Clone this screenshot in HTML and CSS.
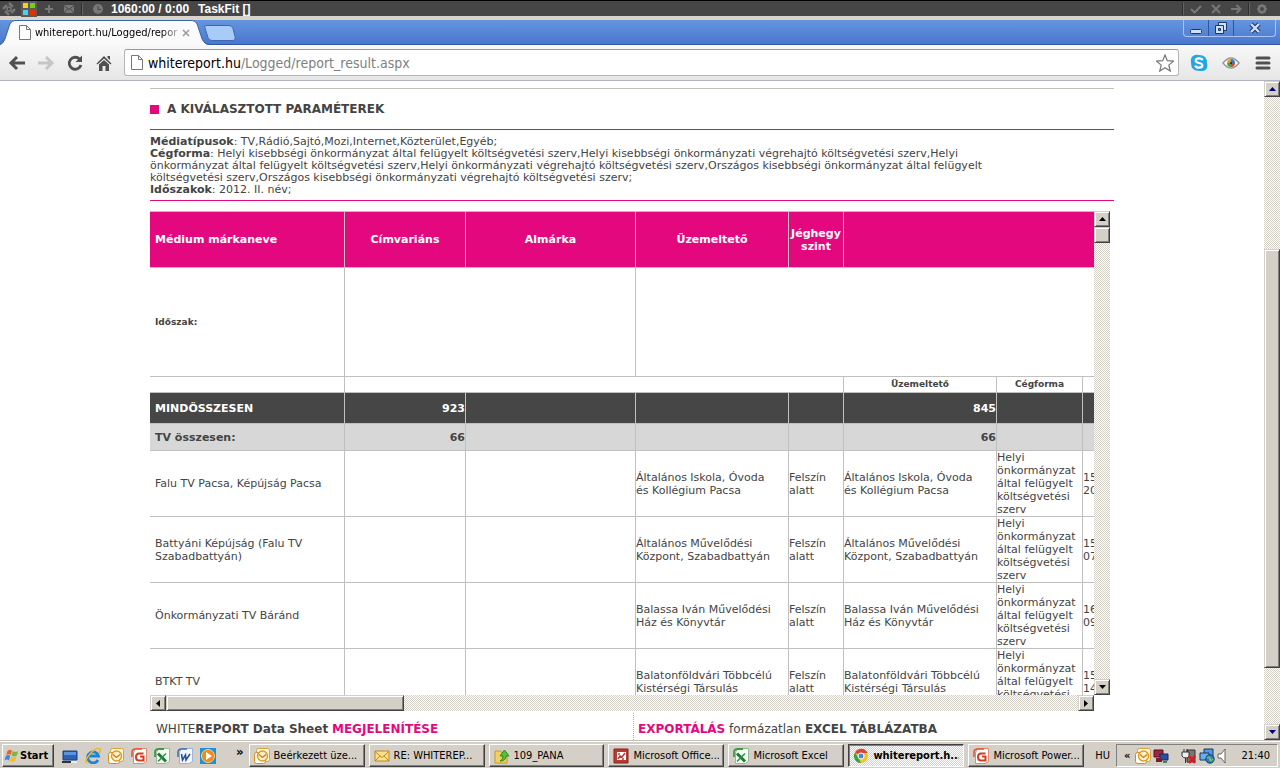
FILE: index.html
```html
<!DOCTYPE html>
<html lang="hu">
<head>
<meta charset="utf-8">
<title>whitereport.hu/Logged/report_result.aspx</title>
<link rel="stylesheet" href="styles.css">
</head>
<body>
<svg class="defs" aria-hidden="true">
  <symbol id="page" viewBox="0 0 12 15"><path d="M.5.5h7l4 4v10H.5z" fill="#fff" stroke="#777"/><path d="M7.500.5v4h4" fill="none" stroke="#777"/></symbol>
  <symbol id="outlook" viewBox="0 0 16 16"><rect x="2.500" y=".5" width="13" height="13" rx="2" fill="#fff7df" stroke="#d9a33c"/><rect x=".5" y="4.500" width="11" height="11" rx="2" fill="#fffdf5" stroke="#d98b1c"/><circle cx="8.500" cy="8" r="5" fill="#fff3cf" stroke="#e09a28" stroke-width="1.500"/><path d="M5 6.500l3.500 3 3.500-3" fill="none" stroke="#c77c14" stroke-width="1.300"/></symbol>
  <symbol id="ppt" viewBox="0 0 16 16"><path d="M4 .5h11.500v13L12 15.500H2.500V5z" fill="#fff" stroke="#e08a70"/><path d="M1 9V4q0-3 4-3h6" fill="none" stroke="#e2532f" stroke-width="1.500"/><path d="M12.500 5.500H8Q5 5.500 5 9t3 3.500h4.500V8.500H9" fill="none" stroke="#d13d1f" stroke-width="2"/></symbol>
  <symbol id="excel" viewBox="0 0 16 16"><path d="M4 .5h11.500v13L12 15.500H2.500V5z" fill="#f5fff3" stroke="#9ab598"/><path d="M1 9V4q0-3 4-3h5" fill="none" stroke="#3f9a45" stroke-width="1.800"/><path d="M4 5.500l8 8" stroke="#1d7b33" stroke-width="3"/><path d="M12 5.500l-8 8" stroke="#2f9245" stroke-width="1.600"/></symbol>
  <symbol id="word" viewBox="0 0 16 16"><path d="M4 .5h11.500v13L12 15.500H2.500V5z" fill="#f4f8ff" stroke="#9db2d9"/><path d="M1 9V4q0-3 4-3h5" fill="none" stroke="#3d68bd" stroke-width="1.500"/><path d="M4.500 6l1 6 3-5 .5 5 4-6" fill="none" stroke="#2450a8" stroke-width="1.600"/></symbol>
</svg>

<header class="taskfit">
  <svg class="i16" viewBox="0 0 16 16"><path d="M8 2l6 6-6 6-6-6z" fill="none" stroke="#777" stroke-width="2.500" stroke-dasharray="5.500 3"/><circle cx="8" cy="8" r="2" fill="none" stroke="#777" stroke-width="1.500"/></svg>
  <svg class="i16 lit" viewBox="0 0 16 16"><path d="M2 2h5v5H2z" fill="#fc1"/><path d="M9 2h5v5H9z" fill="#7c2"/><path d="M2 9h5v5H2z" fill="#5ce"/><path d="M9 9h5v5H9z" fill="#d30"/></svg>
  <svg class="i16" viewBox="0 0 16 16"><path d="M8 4v8M4 8h8" stroke="#777" stroke-width="2"/></svg>
  <svg class="i16" viewBox="0 0 16 16"><path d="M3 4h10v8H3z" fill="#777"/><path d="M3 4.500l5 4 5-4M3 12l3.500-4M13 12L9.500 8" fill="none" stroke="#464646"/></svg>
  <i class="bar"></i>
  <svg class="i16 clock" viewBox="0 0 16 16"><circle cx="8" cy="8" r="5" fill="#777"/><path d="M8 5v3.500h3" fill="none" stroke="#464646"/></svg>
  <b>1060:00 / 0:00</b><b class="app">TaskFit []</b>
  <span class="grow"></span>
  <i class="bar"></i>
  <svg class="i16" viewBox="0 0 16 16"><path d="M3 8l3.500 3.500L13 5" fill="none" stroke="#777" stroke-width="2"/></svg>
  <svg class="i16" viewBox="0 0 16 16"><path d="M4 4l8 8M12 4l-8 8" stroke="#777" stroke-width="2"/></svg>
  <svg class="i16" viewBox="0 0 16 16"><path d="M3 8h9M8.500 4l4 4-4 4" fill="none" stroke="#777" stroke-width="2"/></svg>
  <i class="bar"></i>
  <svg class="i16" viewBox="0 0 16 16"><circle cx="8" cy="8" r="3.200" fill="none" stroke="#777" stroke-width="2.500"/><path d="M8 3v2M8 11v2M3 8h2M11 8h2M4.500 4.500l1.300 1.300M10 10l1.500 1.500M11.500 4.500L10 6M6 10l-1.500 1.500" stroke="#777" stroke-width="1.500"/></svg>
</header>

<div class="tabstrip">
  <div class="tab">
    <svg class="tabshape" viewBox="0 0 212 25" preserveAspectRatio="none"><path d="M0 25Q3 24 5 19L10 4Q12 .5 15 .5H194Q197 .5 199 4L204 19Q206 24 210 25z" fill="#fafafa"/><path d="M0 24.500Q3 24 5 19L10 4Q12 .5 15 .5H194Q197 .5 199 4L204 19Q206 24 212 24.500" fill="none" stroke="#3a62a8"/></svg>
    <svg class="pg" viewBox="0 0 12 15"><use href="#page"/></svg>
    <span class="title">whitereport.hu/Logged/repor</span>
    <button class="close" aria-label="Lap bezárása"><svg viewBox="0 0 8 8"><path d="M1 1l6 6M7 1L1 7" stroke="#999" stroke-width="1.500"/></svg></button>
  </div>
  <button class="newtab" aria-label="Új lap"><svg viewBox="0 0 32 16"><path d="M2 .5h23q3 0 4 3l2 8q1 4-3 4H8q-3 0-4-3L1 3Q0 .5 2 .5z" fill="#a9cbf7" stroke="#3f68b3"/></svg></button>
  <span class="grow"></span>
  <div class="winbtns">
    <button aria-label="Kis méret"><svg viewBox="0 0 14 14"><rect x="1.500" y="8.500" width="11" height="4" rx="1" fill="#cfe0fa" stroke="#1d3768"/></svg></button>
    <button aria-label="Előző méret"><svg viewBox="0 0 14 14"><path d="M4.500 1.500h8v8h-8z" fill="#cfe0fa" stroke="#1d3768"/><path d="M1.500 4.500h8v8h-8z" fill="#cfe0fa" stroke="#1d3768"/><path d="M4.500 7.500h2v2h-2z" fill="#4f7fd3" stroke="#1d3768"/></svg></button>
    <button class="wide" aria-label="Bezárás"><svg viewBox="0 0 14 14"><path d="M3 3l8 8M11 3l-8 8" stroke="#1d3768" stroke-width="4.500"/><path d="M3 3l8 8M11 3l-8 8" stroke="#cfe0fa" stroke-width="2.400"/></svg></button>
  </div>
</div>

<nav class="toolbar">
  <button aria-label="Vissza"><svg viewBox="0 0 18 18"><path d="M17 9H4M9 3L3 9l6 6" fill="none" stroke="#505050" stroke-width="3"/></svg></button>
  <button aria-label="Előre"><svg viewBox="0 0 18 18"><path d="M1 9h13M9 3l6 6-6 6" fill="none" stroke="#c6c6c6" stroke-width="3"/></svg></button>
  <button aria-label="Újratöltés"><svg viewBox="0 0 18 18"><path d="M13.500 5A6 6 0 1 0 15 11" fill="none" stroke="#505050" stroke-width="2.800"/><path d="M16 1.500V8H9.500z" fill="#505050"/></svg></button>
  <button aria-label="Kezdőlap"><svg viewBox="0 0 18 18"><path d="M9 2l7.500 7.500-1 1L9 4.500l-6.500 6-1-1zM12.500 2H15v4l-2.500-2z" fill="#505050"/><path d="M4 10.500l5-4.500 5 4.500V17h-3.500v-5h-3v5H4z" fill="#505050"/></svg></button>
  <form class="omnibox">
    <svg class="pg" viewBox="0 0 12 15"><use href="#page"/></svg>
    <label for="url">whitereport.hu</label><input id="url" type="text" value="/Logged/report_result.aspx">
    <button type="button" aria-label="Könyvjelző"><svg viewBox="0 0 18 18"><path d="M9 1l2.300 5.700 6.200.4-4.700 4 1.500 6L9 13.800 3.700 17.100l1.500-6-4.700-4 6.200-.4z" fill="#fff" stroke="#777" stroke-width="1.200"/></svg></button>
  </form>
  <button class="ext" aria-label="Skype"><svg viewBox="0 0 18 18"><path d="M5 1q2-.5 4 0 8 0 8 8 1 3-.5 6-2 2.500-5 2Q1 18 1 9 0 2 5 1z" fill="#22a7e6"/><path d="M12.500 6.200Q12 4.300 9 4.300T5.700 6.600Q5.700 8.300 9 9t3.300 2.500q0 2.200-3.300 2.200t-3.700-2.200" fill="none" stroke="#fff" stroke-width="2.200"/></svg></button>
  <button class="ext" aria-label="Szem"><svg viewBox="0 0 18 18"><path d="M1 9q8-10 16 0-8 10-16 0z" fill="#fff" stroke="#999" stroke-width="1.500"/><path d="M9 5v4H5a4 4 0 0 1 4-4z" fill="#d9a321"/><path d="M9 5v4h4a4 4 0 0 0-4-4z" fill="#3a78c9"/><path d="M9 13V9H5a4 4 0 0 0 4 4z" fill="#4aa04b"/><path d="M9 13V9h4a4 4 0 0 1-4 4z" fill="#d34a2a"/><circle cx="9" cy="9" r="1" fill="#222"/></svg></button>
  <button class="ext" aria-label="Menü"><svg viewBox="0 0 18 18"><path d="M3 4h12M3 9h12M3 14h12" stroke="#505050" stroke-width="3" stroke-linecap="round"/></svg></button>
</nav>

<div class="viewport">
  <main class="page">
    <h1>A KIVÁLASZTOTT PARAMÉTEREK</h1>
    <section class="params">
      <p><b>Médiatípusok</b>: TV,Rádió,Sajtó,Mozi,Internet,Közterület,Egyéb;</p>
      <p><b>Cégforma</b>: Helyi kisebbségi önkormányzat által felügyelt költségvetési szerv,Helyi kisebbségi önkormányzati végrehajtó költségvetési szerv,Helyi önkormányzat által felügyelt költségvetési szerv,Helyi önkormányzati végrehajtó költségvetési szerv,Országos kisebbségi önkormányzat által felügyelt költségvetési szerv,Országos kisebbségi önkormányzati végrehajtó költségvetési szerv;</p>
      <p><b>Időszakok</b>: 2012. II. név;</p>
    </section>
    <section class="viewer">
      <div class="clip">
        <table>
          <colgroup><col class="c1"><col class="c2"><col class="c3"><col class="c4"><col class="c5"><col class="c4"><col class="c7"><col class="c8"></colgroup>
          <thead>
            <tr class="head"><th class="name">Médium márkaneve</th><th>Címvariáns</th><th>Almárka</th><th>Üzemeltető</th><th>Jéghegy szint</th><th colspan="3"></th></tr>
            <tr class="period"><th class="name">Időszak:</th><th colspan="2"></th><th colspan="5"></th></tr>
            <tr class="sub"><th></th><th colspan="4"></th><th>Üzemeltető</th><th>Cégforma</th><th></th></tr>
          </thead>
          <tbody>
            <tr class="total"><td class="name">MINDÖSSZESEN</td><td class="num">923</td><td></td><td></td><td></td><td class="num">845</td><td></td><td></td></tr>
            <tr class="subtotal"><td class="name">TV összesen:</td><td class="num">66</td><td></td><td></td><td></td><td class="num">66</td><td></td><td></td></tr>
            <tr class="row"><td class="name">Falu TV Pacsa, Képújság Pacsa</td><td></td><td></td><td class="org">Általános Iskola, Óvoda és Kollégium Pacsa</td><td>Felszín alatt</td><td class="org">Általános Iskola, Óvoda és Kollégium Pacsa</td><td>Helyi önkormányzat által felügyelt költségvetési szerv</td><td>15<br>20</td></tr>
            <tr class="row"><td class="name">Battyáni Képújság (Falu TV Szabadbattyán)</td><td></td><td></td><td class="org">Általános Művelődési Központ, Szabadbattyán</td><td>Felszín alatt</td><td class="org">Általános Művelődési Központ, Szabadbattyán</td><td>Helyi önkormányzat által felügyelt költségvetési szerv</td><td>15<br>07</td></tr>
            <tr class="row"><td class="name">Önkormányzati TV Báránd</td><td></td><td></td><td class="org">Balassa Iván Művelődési Ház és Könyvtár</td><td>Felszín alatt</td><td class="org">Balassa Iván Művelődési Ház és Könyvtár</td><td>Helyi önkormányzat által felügyelt költségvetési szerv</td><td>16<br>09</td></tr>
            <tr class="row"><td class="name">BTKT TV</td><td></td><td></td><td class="org">Balatonföldvári Többcélú Kistérségi Társulás</td><td>Felszín alatt</td><td class="org">Balatonföldvári Többcélú Kistérségi Társulás</td><td>Helyi önkormányzat által felügyelt költségvetési szerv</td><td>15<br>14</td></tr>
          </tbody>
        </table>
      </div>
      <div class="sb v"><button aria-label="Fel"><svg viewBox="0 0 7 4"><path d="M0 4h7L3.500 0z"/></svg></button><i class="thumb small"></i><span class="grow"></span><button aria-label="Le"><svg viewBox="0 0 7 4"><path d="M0 0h7L3.500 4z"/></svg></button></div>
      <div class="sb h"><button aria-label="Balra"><svg class="side" viewBox="0 0 4 7"><path d="M4 0v7L0 3.500z"/></svg></button><i class="thumb quarter"></i><span class="grow"></span><button aria-label="Jobbra"><svg class="side" viewBox="0 0 4 7"><path d="M0 0v7l4-3.500z"/></svg></button></div>
    </section>
    <footer class="links">
      <p>WHITE<b>REPORT Data Sheet</b> <a href="#sheet">MEGJELENÍTÉSE</a></p>
      <p class="export"><a href="#export">EXPORTÁLÁS</a> formázatlan <b>EXCEL TÁBLÁZATBA</b></p>
    </footer>
  </main>
  <div class="sb v main"><button aria-label="Oldal fel"><svg viewBox="0 0 7 4"><path d="M0 4h7L3.500 0z"/></svg></button><span class="before"></span><i class="thumb long"></i><span class="after"></span><button aria-label="Oldal le"><svg viewBox="0 0 7 4"><path d="M0 0h7L3.500 4z"/></svg></button></div>
</div>

<footer class="taskbar">
  <button class="start"><svg viewBox="0 0 18 16"><path d="M4 2q3-2 5 0L7.500 7q-2-2-5 0z" fill="#e8622a"/><path d="M10 2.500q3 2 6 0L14.500 7.500q-3 2-6 0z" fill="#7db83a"/><path d="M2 8q3-2 5 0L5.500 13q-2-2-5 0z" fill="#3f86d8"/><path d="M8 8.500q3 2 6 0L12.500 13.500q-3 2-6 0z" fill="#f3bd2e"/></svg>Start</button>
  <div class="quick">
    <svg viewBox="0 0 16 16"><path d="M1 3h14v9H1z" fill="#2a62b8" stroke="#173e7d"/><path d="M2 4h12v3H2z" fill="#5b93dc"/><path d="M0 13h9v2H0z" fill="#333"/><path d="M9 13h6v2H9z" fill="#eee"/></svg>
    <svg viewBox="0 0 16 16"><path d="M13 12A5.500 5.500 0 1 1 13.500 8H4" fill="none" stroke="#1f83d6" stroke-width="2.800"/><path d="M2 15Q-1 13 5 6T15 1q1 2-1 4" fill="none" stroke="#eeb52c" stroke-width="1.500"/></svg>
    <svg viewBox="0 0 16 16"><use href="#outlook"/></svg>
    <svg viewBox="0 0 16 16"><use href="#ppt"/></svg>
    <svg viewBox="0 0 16 16"><use href="#excel"/></svg>
    <svg viewBox="0 0 16 16"><use href="#word"/></svg>
    <svg viewBox="0 0 16 16"><path d="M0 0h16v16H0z" fill="#1c93d8"/><circle cx="8" cy="8" r="6.500" fill="#f08a1d" stroke="#fbd08a"/><path d="M6 4l6 4-6 4z" fill="#fff"/></svg>
  </div>
  <b class="more">»</b>
  <div class="tasks">
    <button><svg viewBox="0 0 16 16"><use href="#outlook"/></svg><span>Beérkezett üze...</span></button>
    <button><svg viewBox="0 0 16 16"><path d="M1 3h14v10H1z" fill="#fbe08a" stroke="#b98a24"/><path d="M1 3.500l7 6 7-6M1 13l5-5M15 13l-5-5" fill="none" stroke="#b98a24"/></svg><span>RE: WHITEREP...</span></button>
    <button><svg viewBox="0 0 16 16"><path d="M1 3h6l1 2h5v10H1z" fill="#f5d060" stroke="#c09a30"/><path d="M6 13q3-1 3-5H6l4.500-6L15 8h-3q0 5-6 5z" fill="#56c23c" stroke="#2b8a22"/></svg><span>109_PANA</span></button>
    <button><svg viewBox="0 0 16 16"><path d="M1 1h14v14H1z" fill="#b93a34" stroke="#842420"/><path d="M4 4h9v8H4z" fill="#fff"/><path d="M5 11l2-3 2 1 3-4M6 5v2M9 11h2" fill="none" stroke="#b93a34" stroke-width="1.400"/></svg><span>Microsoft Office...</span></button>
    <button><svg viewBox="0 0 16 16"><use href="#excel"/></svg><span>Microsoft Excel</span></button>
    <button class="on"><svg viewBox="0 0 16 16"><circle cx="8" cy="8" r="7" fill="#f4c625"/><path d="M8 8L2 4.400A7 7 0 0 1 14.500 5H8z" fill="#dd4535"/><path d="M2 4.400L6 11l2 4A7 7 0 0 1 2 4.400z" fill="#39a14a"/><circle cx="8" cy="8" r="3" fill="#4d87dc" stroke="#fff"/></svg><span>whitereport.h...</span></button>
    <button><svg viewBox="0 0 16 16"><use href="#ppt"/></svg><span>Microsoft Power...</span></button>
  </div>
  <span class="lang">HU</span>
  <div class="tray">
    <b>«</b>
    <svg viewBox="0 0 16 16"><use href="#outlook"/></svg>
    <svg viewBox="0 0 16 16"><path d="M1 2h9v7H1z" fill="#a3223c" stroke="#501020"/><path d="M7 6h8v6H7z" fill="#2c4fa0" stroke="#142a60"/><path d="M3 10h6v4H3z" fill="#7b1c30"/><path d="M10 13h4v2h-4z" fill="#3c8a4c"/></svg>
    <svg class="plug" viewBox="0 0 16 16"><path d="M6 2h8v12H6z" fill="#777" stroke="#333"/><path d="M1 4h7v4q0 2-3 2T1 8z" fill="#eee" stroke="#333"/><path d="M3 1v3M6 1v3M4.500 10v5" stroke="#333"/><path d="M8 8l6 7M14 8l-6 7" stroke="#e01818" stroke-width="2.500"/></svg>
    <svg viewBox="0 0 16 16"><path d="M5 1h9v8H5z" fill="#4b9be8" stroke="#235"/><path d="M1 5h9v7H1z" fill="#62b1f3" stroke="#235"/><circle cx="11" cy="11" r="4.200" fill="#2f76c9" stroke="#17406f"/><path d="M8 10q3-2 3 1t3 0" fill="none" stroke="#62c45a" stroke-width="2"/></svg>
    <svg viewBox="0 0 16 16"><path d="M1 6h3l4-5v14l-4-5H1z" fill="#fff" stroke="#666"/></svg>
    <time>21:40</time>
  </div>
</footer>
</body>
</html>
```
FILE: styles.css
```css
* { box-sizing: border-box; }
body {
  margin: 0;
  height: 100vh;
  display: flex;
  flex-direction: column;
  overflow: hidden;
  background: #fff;
  color: #444;
  font: 11px/13px "DejaVu Sans", Verdana, sans-serif;
}
button { padding: 0; border: 0; background: none; font: inherit; color: inherit; }
svg { display: block; flex: none; }
p, h1 { margin: 0; }
.defs { position: absolute; width: 0; height: 0; }
.grow { flex: 1; }

/* Timer strip */
.taskfit {
  flex: none;
  height: 20px;
  display: flex;
  align-items: center;
  padding: 0 10px 0 1px;
  gap: 4px;
  border-top: 1px solid #000;
  border-bottom: 4px solid #d8d4ca;
  background: #464646;
  color: #fff;
  font: 12px/18px "Liberation Sans", Arial, sans-serif;
}
.i16 { width: 16px; height: 16px; }
.lit { background: #5a5a5a; }
.clock { margin: 0 1px 0 3px; }
.bar { width: 2px; height: 12px; border-left: 1px solid #2b2b2b; border-right: 1px solid #666; }
.app { margin-left: 5px; }

/* Tabs */
.tabstrip {
  flex: none;
  height: 25px;
  display: flex;
  background: linear-gradient(#6595df, #4a77cf);
  border-bottom: 1px solid #35599c;
}
.tab {
  position: relative;
  width: 204px;
  height: 25px;
  display: flex;
  align-items: center;
  gap: 4px;
  padding: 0 14px 0 19px;
  font: 11px/14px "DejaVu Sans Condensed", Tahoma, sans-serif;
  color: #000;
}
.tabshape { position: absolute; inset: 0 -6px 0 0; width: 210px; height: 25px; }
.tab > .pg, .title, .close { position: relative; }
.pg { width: 12px; height: 15px; }
.title {
  flex: 1;
  min-width: 0;
  overflow: hidden;
  white-space: nowrap;
  mask-image: linear-gradient(90deg, #000 88%, transparent 105%);
}
.close svg { width: 8px; height: 8px; }
.newtab { align-self: flex-start; margin-top: 5px; }
.newtab svg { width: 32px; height: 16px; }
.winbtns { display: flex; height: 17px; margin-right: 4px; border: 1px solid #a9c5f2; border-top: 0; border-radius: 0 0 4px 4px; }
.winbtns button { width: 25px; display: grid; place-items: center; border-right: 1px solid #2f549a; }
.winbtns .wide { width: 41px; border: 0; }
.winbtns svg { width: 14px; height: 14px; }

/* Address bar */
.toolbar {
  flex: none;
  height: 36px;
  display: flex;
  align-items: center;
  gap: 11px;
  padding: 0 8px;
  background: linear-gradient(#f8f8f8, #e6e6e6);
  border-bottom: 1px solid #b4b4be;
}
.toolbar button svg { width: 18px; height: 18px; }
.omnibox {
  flex: 1;
  height: 27px;
  display: flex;
  align-items: center;
  padding: 0 4px 0 6px;
  background: #fff;
  border: 1px solid #b5b5b5;
  border-top-color: #999;
  border-radius: 3px;
  font: 14px/18px "DejaVu Sans Condensed", Tahoma, sans-serif;
}
.omnibox label { margin-left: 5px; color: #000; }
.omnibox input { flex: 1; min-width: 0; padding: 0; border: 0; outline: 0; background: none; color: #808080; font: inherit; }
.ext { margin-right: 3px; }
.ext:last-child { margin-right: 0; }

/* Report page */
.viewport { flex: 1; min-height: 0; display: flex; }
.page {
  flex: 1;
  min-width: 0;
  max-width: 964px;
  margin: 7px auto 0;
  display: flex;
  flex-direction: column;
  border-top: 1px solid #c0c0c0;
}
h1 {
  display: flex;
  align-items: center;
  gap: 8px;
  height: 41px;
  border-bottom: 1px solid #e4087f;
  font-size: 12px;
  line-height: 16px;
}
h1::before { content: ""; width: 9px; height: 9px; background: #e4087f; }
.params { padding: 6px 104px 4px 0; line-height: 12px; border-bottom: 1px solid #e4087f; }
.viewer {
  flex: 1;
  min-height: 0;
  margin: 10px 4px 0 0;
  display: grid;
  grid-template: minmax(0, 1fr) 16px / minmax(0, 1fr) 16px;
}
.clip { overflow: hidden; }
table { width: 1133px; table-layout: fixed; border-collapse: separate; border-spacing: 0; border-top: 1px solid #c0c0c0; }
.c1 { width: 195px; } .c2 { width: 121px; } .c3 { width: 170px; } .c4 { width: 153px; }
.c5 { width: 55px; } .c7 { width: 86px; } .c8 { width: 200px; }
th, td { padding: 0; border-right: 1px solid #c0c0c0; border-bottom: 1px solid #c0c0c0; text-align: left; vertical-align: middle; }
th { text-align: center; }
.name { padding-left: 5px; text-align: left; }
.org { padding-right: 10px; }
.num { text-align: right; }
.head { height: 56px; background: #e4087f; color: #fff; }
.period { height: 109px; font-size: 9px; }
.sub { height: 16px; font-size: 9px; }
.total { height: 31px; background: #464646; color: #fff; font-weight: bold; }
.subtotal { height: 27px; background: #d7d7d7; font-weight: bold; }
.row { height: 66px; }

/* Classic scroll bars */
.sb {
  display: flex;
  background: repeating-conic-gradient(#d4d0c8 0 25%, #fff 0 50%) 0 0 / 2px 2px;
}
.sb.v { flex-direction: column; width: 16px; }
.sb.h { height: 16px; }
.sb button, .thumb {
  flex: none;
  min-width: 16px;
  min-height: 16px;
  display: grid;
  place-items: center;
  background: #d4d0c8;
  border: 1px solid;
  border-color: #d4d0c8 #404040 #404040 #d4d0c8;
  box-shadow: inset 1px 1px #fff, inset -1px -1px #808080;
}
.sb svg { width: 7px; height: 4px; fill: #000; }
.sb .side { width: 4px; height: 7px; }
.sb.main svg { fill: #000080; }
.small { height: 16px; }
.quarter { width: 238px; }
.before { flex: 152; }
.thumb.long { flex: 419; }
.after { flex: 56; }

.links { flex: none; display: flex; padding-top: 2px; font-size: 12px; line-height: 16px; }
.links p { width: 483px; padding: 8px 0 3px 6px; }
.links .export { flex: 1; padding-left: 4px; border-left: 1px dotted #aaa; }
.links a { color: #e4087f; font-weight: bold; text-decoration: none; }

/* Taskbar */
.taskbar {
  flex: none;
  height: 28px;
  display: flex;
  align-items: center;
  padding: 2px 2px 0;
  background: #d4d0c8;
  border-top: 1px solid #c4c0b8;
  box-shadow: inset 0 1px #fff;
  color: #000;
  font: 11px/14px "DejaVu Sans Condensed", Tahoma, sans-serif;
}
.taskbar svg { width: 16px; height: 16px; }
.start, .tasks button {
  height: 23px;
  display: flex;
  align-items: center;
  border: 1px solid;
  border-color: #fff #404040 #404040 #fff;
  box-shadow: inset -1px -1px #808080;
}
.start { width: 52px; font-weight: bold; padding-left: 1px; }
.quick { display: flex; gap: 7px; margin-left: 8px; }
.more { margin: 0 5px 8px 20px; font-size: 13px; line-height: 12px; }
.start, .quick, .more, .lang { flex: none; }
.tasks { flex: 1; min-width: 0; display: flex; gap: 4px; }
.tasks button { flex: 1 1 0; min-width: 0; gap: 4px; padding: 0 4px; }
.tasks span { overflow: hidden; white-space: nowrap; }
.tasks .on {
  font-weight: bold;
  background: repeating-conic-gradient(#d4d0c8 0 25%, #fff 0 50%) 0 0 / 2px 2px;
  border-color: #404040 #fff #fff #404040;
  box-shadow: inset 1px 1px #808080;
}
.lang { margin: 0 6px 0 11px; }
.tray {
  flex: none;
  width: 162px;
  height: 23px;
  display: flex;
  align-items: center;
  gap: 2px;
  padding: 0 7px;
  border: 1px solid;
  border-color: #808080 #fff #fff #808080;
}
.tray b { margin-right: 3px; }
.plug { margin-left: 10px; }
.tray time { margin-left: auto; }
```
